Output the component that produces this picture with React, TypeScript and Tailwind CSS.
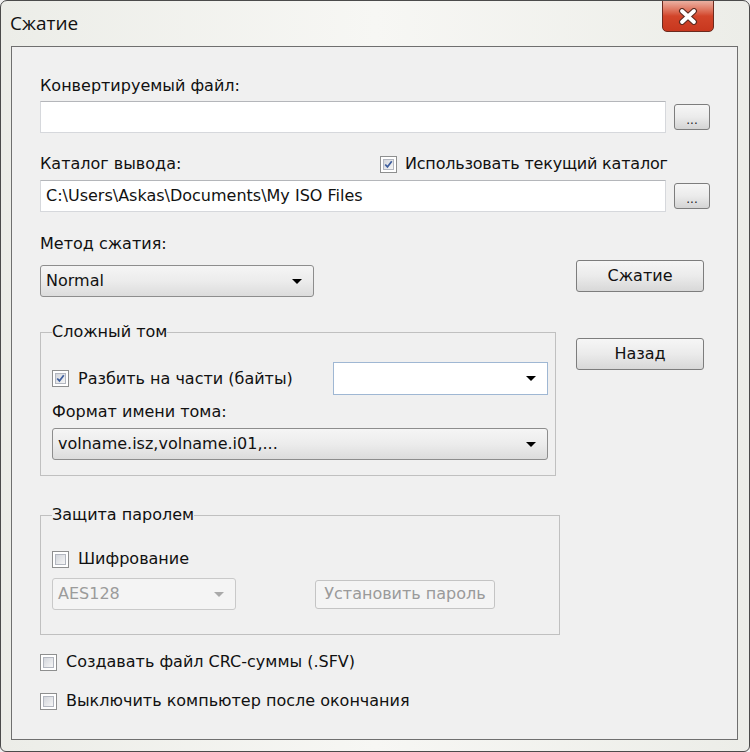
import React from "react";

const F = "font-['DejaVu_Sans',sans-serif]";

function Check({ checked }: { checked?: boolean }) {
  return (
    <div className="w-[17px] h-[17px] shrink-0 border border-[#8e8f8f] bg-white p-[2px]">
      <div className="w-full h-full border border-[#b3b7c0] bg-gradient-to-br from-[#d3d6dc] to-[#f6f6f6] flex items-center justify-center">
        {checked && (
          <svg width="11" height="11" viewBox="0 0 11 11">
            <path d="M1.5 5.5 L4.2 8.5 L9.5 1.5" fill="none" stroke="#3f5f9e" strokeWidth="2.2" />
          </svg>
        )}
      </div>
    </div>
  );
}

function Arrow({ color = "#000" }: { color?: string }) {
  return (
    <svg width="10" height="5" viewBox="0 0 10 5">
      <path d="M0 0 H10 L5 5 Z" fill={color} />
    </svg>
  );
}

function DropBtn({ w, text, className = "" }: { w: string; text: string; className?: string }) {
  return (
    <div
      className={`${w} h-[32px] rounded-[3px] border border-[#8d8d8d] bg-gradient-to-b from-[#f5f5f5] via-[#ececec] to-[#dcdcdc] flex items-center pl-[5px] pr-[11px] ${className}`}
    >
      <span className="flex-1 whitespace-nowrap text-[16px] leading-[20px] text-[#111]">{text}</span>
      <Arrow />
    </div>
  );
}

function Button({ label, w, h, disabled }: { label: string; w: string; h: string; disabled?: boolean }) {
  return (
    <div
      className={`${w} ${h} rounded-[3px] border flex items-center justify-center whitespace-nowrap text-[16px] leading-[20px] ${
        disabled
          ? "border-[#c4c4c4] bg-[#f4f4f4] text-[#9a9a9a]"
          : "border-[#7d7d7d] bg-gradient-to-b from-[#f6f6f6] via-[#ebebeb] to-[#d8d8d8] text-[#111]"
      }`}
    >
      {label}
    </div>
  );
}

function DotsBtn() {
  return (
    <div className="w-[36px] h-[26px] rounded-[3px] border border-[#7d7d7d] bg-gradient-to-b from-[#f6f6f6] via-[#ebebeb] to-[#d4d4d4] flex items-end justify-center pb-[3px] text-[12px] leading-[12px] text-[#222]">
      ...
    </div>
  );
}

export default function App() {
  return (
    <div className={`w-[750px] h-[752px] bg-[#f0f0f0] ${F}`}>
      <div className="w-[750px] h-[752px] flex flex-col border border-[#4b4b4b] rounded-t-[7px] rounded-b-[6px] bg-gradient-to-r from-[#ecede8] via-[#f7f7f4] to-[#ecede8] relative overflow-hidden">
        {/* title bar */}
        <div className="h-[45px] shrink-0 flex items-center pl-[9px] pb-[1px]">
          <span className="text-[19px] leading-[22px] text-[#111] font-['Open_Sans',sans-serif]">Сжатие</span>
        </div>
        {/* close button */}
        <div className="absolute left-[661px] top-[-1px] w-[52px] h-[32px] rounded-b-[5px] border border-[#6b2a1e] bg-gradient-to-b from-[#eab0a2] via-[#d2452a] to-[#c8371e] flex items-center justify-center">
          <svg width="20" height="17" viewBox="0 0 20 17">
            <path d="M4 3 L16 14 M16 3 L4 14" stroke="#5b2a20" strokeWidth="6" strokeLinecap="round" />
            <path d="M4 3 L16 14 M16 3 L4 14" stroke="#fff" strokeWidth="3.8" strokeLinecap="round" />
          </svg>
        </div>

        {/* client area */}
        <div className="flex-1 ml-[10px] mr-[11px] mb-[11px] border border-[#6f6f6f] bg-[#f0f0f0] pl-[28px] text-[#111] text-[16px] leading-[20px] whitespace-nowrap">
          <div className="mt-[29px]">Конвертируемый файл:</div>
          <div className="mt-[5px] flex items-center gap-[8px]">
            <div className="w-[626px] h-[32px] bg-white border border-[#d6d8dc] border-t-[#b4b6ba]" />
            <DotsBtn />
          </div>

          <div className="mt-[21px] flex items-center w-[628px]">
            <div className="flex-1">Каталог вывода:</div>
            <div className="w-[288px] flex items-center gap-[8px]">
              <Check checked />
              <span className="tracking-[-0.2px]">Использовать текущий каталог</span>
            </div>
          </div>
          <div className="mt-[6px] flex items-center gap-[8px]">
            <div className="w-[626px] h-[32px] bg-white border border-[#d6d8dc] border-t-[#b4b6ba] flex items-center pl-[5px]">
              C:\Users\Askas\Documents\My ISO Files
            </div>
            <DotsBtn />
          </div>

          <div className="flex">
            {/* left column */}
            <div className="w-[520px]">
              <div className="mt-[22px]">Метод сжатия:</div>
              <DropBtn w="w-[274px]" text="Normal" className="mt-[11px]" />

              <fieldset className="mt-[25px] w-[516px] border border-[#c0c0c0] pl-[11px] pr-[7px] pb-[15px]">
                <legend className="leading-[20px]">Сложный том</legend>
                <div className="mt-[20px] h-[33px] flex items-center">
                  <Check checked />
                  <span className="ml-[9px] w-[255px]">Разбить на части (байты)</span>
                  <div className="w-[215px] h-[33px] bg-white border border-[#9fb7d3] flex items-center justify-end pr-[11px]">
                    <Arrow />
                  </div>
                </div>
                <div className="mt-[7px]">Формат имени тома:</div>
                <DropBtn w="w-[496px]" text="volname.isz,volname.i01,..." className="mt-[6px]" />
              </fieldset>

              <fieldset className="mt-[29px] w-[520px] border border-[#c0c0c0] pl-[11px] pb-[24px]">
                <legend className="leading-[20px]">Защита паролем</legend>
                <div className="mt-[24px] h-[20px] flex items-center">
                  <Check />
                  <span className="ml-[9px]">Шифрование</span>
                </div>
                <div className="mt-[9px] flex items-center">
                  <div className="w-[184px] h-[32px] rounded-[3px] border border-[#c9c9c9] bg-[#f4f4f4] flex items-center pl-[5px] pr-[11px] text-[#9b9b9b]">
                    <span className="flex-1">AES128</span>
                    <Arrow color="#a9a9a9" />
                  </div>
                  <div className="ml-[79px]">
                    <Button label="Установить пароль" w="w-[180px]" h="h-[29px]" disabled />
                  </div>
                </div>
              </fieldset>

              <div className="mt-[17px] h-[20px] flex items-center">
                <Check />
                <span className="ml-[9px]">Создавать файл CRC-суммы (.SFV)</span>
              </div>
              <div className="mt-[19px] h-[20px] flex items-center">
                <Check />
                <span className="ml-[9px]">Выключить компьютер после окончания</span>
              </div>
            </div>

            {/* right column */}
            <div className="ml-[16px] flex flex-col">
              <div className="mt-[48px]">
                <Button label="Сжатие" w="w-[128px]" h="h-[32px]" />
              </div>
              <div className="mt-[46px]">
                <Button label="Назад" w="w-[128px]" h="h-[32px]" />
              </div>
            </div>
          </div>
        </div>
      </div>
    </div>
  );
}
